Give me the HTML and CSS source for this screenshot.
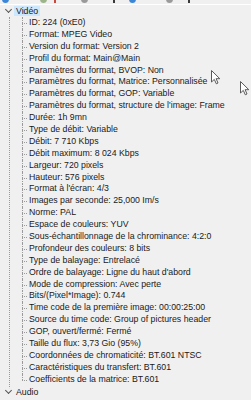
FILE: index.html
```html
<!DOCTYPE html>
<html lang="fr">
<head>
    <meta charset="UTF-8">
    <meta name="viewport" content="width=device-width, initial-scale=1.0">
    <title>MediaInfo - Arbre</title>
    <link rel="stylesheet" href="styles.css">
</head>
<body>

<div class="toolbar">
    <span class="tb tb-blue tb-1"></span>
    <span class="tb tb-green tb-2"></span>
    <span class="tb tb-red tb-3"></span>
    <span class="tb tb-gray tb-4"></span>
    <span class="tb tb-dark tb-5"></span>
    <span class="tb tb-blue tb-6"></span>
    <span class="tb tb-gray tb-7"></span>
    <span class="tb tb-dark tb-8"></span>
</div>

<ul class="tree">
    <li class="node">
        <div class="row"><span class="chev"></span><span class="label selected">Vidéo</span></div>
        <ul class="children">
            <li>ID: 224 (0xE0)</li>
            <li>Format: MPEG Video</li>
            <li>Version du format: Version 2</li>
            <li>Profil du format: Main@Main</li>
            <li>Paramètres du format, BVOP: Non</li>
            <li>Paramètres du format, Matrice: Personnalisée</li>
            <li>Paramètres du format, GOP: Variable</li>
            <li>Paramètres du format, structure de l'image: Frame</li>
            <li>Durée: 1h 9mn</li>
            <li>Type de débit: Variable</li>
            <li>Débit: 7 710 Kbps</li>
            <li>Débit maximum: 8 024 Kbps</li>
            <li>Largeur: 720 pixels</li>
            <li>Hauteur: 576 pixels</li>
            <li>Format à l'écran: 4/3</li>
            <li>Images par seconde: 25,000 Im/s</li>
            <li>Norme: PAL</li>
            <li>Espace de couleurs: YUV</li>
            <li>Sous-échantillonnage de la chrominance: 4:2:0</li>
            <li>Profondeur des couleurs: 8 bits</li>
            <li>Type de balayage: Entrelacé</li>
            <li>Ordre de balayage: Ligne du haut d'abord</li>
            <li>Mode de compression: Avec perte</li>
            <li>Bits/(Pixel*Image): 0.744</li>
            <li>Time code de la première image: 00:00:25:00</li>
            <li>Source du time code: Group of pictures header</li>
            <li>GOP, ouvert/fermé: Fermé</li>
            <li>Taille du flux: 3,73 Gio (95%)</li>
            <li>Coordonnées de chromaticité: BT.601 NTSC</li>
            <li>Caractéristiques du transfert: BT.601</li>
            <li>Coefficients de la matrice: BT.601</li>
        </ul>
    </li>
    <li class="node">
        <div class="row"><span class="chev"></span><span class="label">Audio</span></div>
    </li>
</ul>

<!-- mouse pointers left in the capture -->
<svg class="cursor cursor-1" width="11" height="15" viewBox="0 0 11 15">
    <path d="M0.5 0.5 L0.5 12 L3.3 9.4 L5.3 13.8 L7 13 L5.1 8.7 L8.8 8.7 Z" fill="#fff" stroke="#5a5a5a" stroke-width="1" stroke-linejoin="round"/>
</svg>
<svg class="cursor cursor-2" width="11" height="15" viewBox="0 0 11 15">
    <path d="M0.5 0.5 L0.5 12 L3.3 9.4 L5.3 13.8 L7 13 L5.1 8.7 L8.8 8.7 Z" fill="#fff" stroke="#5a5a5a" stroke-width="1" stroke-linejoin="round"/>
</svg>

</body>
</html>
```

FILE: styles.css
```css
html, body {
    height: 100%;
}
body {
    font-family: "Liberation Sans", Arial, sans-serif;
    font-size: 8.75px;
    color: #1a1a1a;
    background-color: #f0f0f0;
    margin: 0;
    overflow: hidden;
    position: relative;
}
.toolbar {
    height: 4px;
    border-bottom: 1px solid #ffffff;
    display: flex;
    overflow: hidden;
}
.tb {
    width: 7px;
    height: 8px;
    margin-top: -5px;
    border-radius: 50%;
    flex: none;
}
.tb-blue { background-color: #3b86d8; }
.tb-green { background-color: #9bb48a; }
.tb-red { background-color: #c9473d; width: 2px; border-radius: 0; }
.tb-gray { background-color: #9a9a9a; }
.tb-dark { background-color: #3a3a3a; width: 2px; border-radius: 0; }
.tb-1 { margin-left: 2px; }
.tb-2 { margin-left: 31px; }
.tb-3 { margin-left: 7px; }
.tb-4 { margin-left: 25px; }
.tb-5 { margin-left: 25px; }
.tb-6 { margin-left: 14px; }
.tb-7 { margin-left: 30px; }
.tb-8 { margin-left: 15px; }

.tree {
    list-style: none;
    margin: 0;
    padding: 0;
    position: relative;
}
.tree::before {
    content: "";
    position: absolute;
    left: 9px;
    top: 12px;
    bottom: 9px;
    border-left: 1px dotted #9a9a9a;
}
.row {
    height: 12px;
    line-height: 12px;
    display: flex;
    align-items: center;
    white-space: nowrap;
}
.chev {
    width: 4px;
    height: 4px;
    margin-left: 6px;
    margin-top: -3px;
    border-right: 1px solid #555;
    border-bottom: 1px solid #555;
    transform: rotate(45deg);
    flex: none;
    background-color: #f0f0f0;
    position: relative;
    z-index: 1;
}
.label {
    margin-left: 3px;
    padding: 0 2px;
    line-height: 10px;
}
.selected {
    background-color: #cce8ff;
}
.children {
    list-style: none;
    margin: 0;
    padding: 0;
}
.children li {
    position: relative;
    height: 11.9px;
    line-height: 11.9px;
    padding-left: 29px;
    white-space: nowrap;
}
.children li::before {
    content: "";
    position: absolute;
    left: 22px;
    top: 6px;
    width: 5px;
    border-top: 1px dotted #9a9a9a;
}
.children li::after {
    content: "";
    position: absolute;
    left: 22px;
    top: 0;
    height: 12px;
    border-left: 1px dotted #9a9a9a;
}
.children li:last-child::after {
    height: 6px;
}
.cursor {
    position: absolute;
}
.cursor-1 {
    left: 211px;
    top: 70px;
}
.cursor-2 {
    left: 240px;
    top: 81px;
}
```
